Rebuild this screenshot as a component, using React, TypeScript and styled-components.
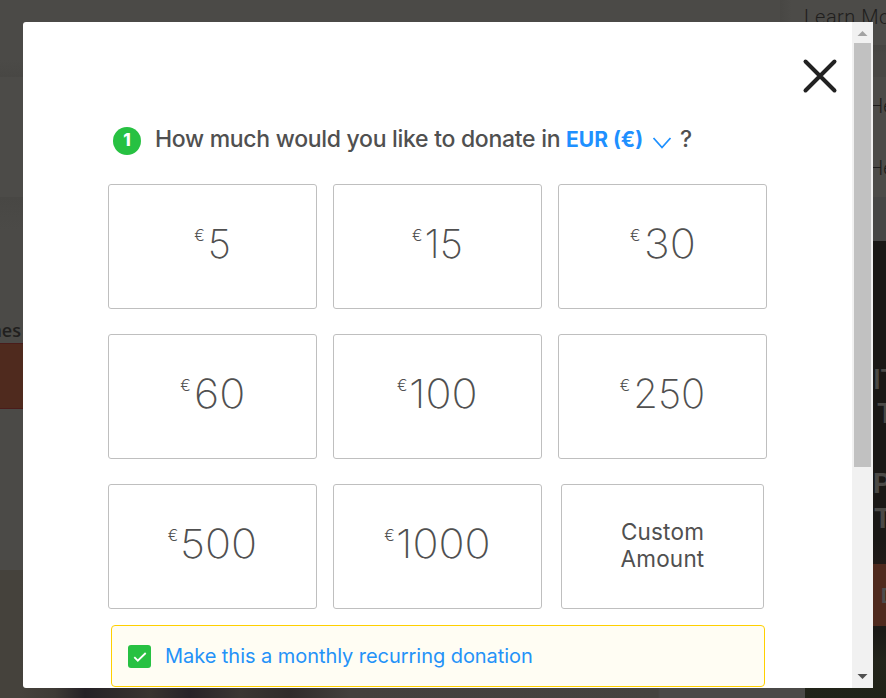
import React from 'react';
import styled, { createGlobalStyle } from 'styled-components';

const GlobalStyle = createGlobalStyle`
  * { box-sizing: border-box; }
  html, body, #root { margin: 0; height: 100%; }
  body { overflow: hidden; font-family: Inter, "Liberation Sans", sans-serif; color: #505050; }
`;

const Screen = styled.div`
  position: relative;
  width: 886px;
  height: 698px;
  overflow: hidden;
  background: #4b4a47;
`;

const Page = styled.div`
  display: grid;
  grid-template-columns: 780px 106px;
  height: 698px;
`;

const MainColumn = styled.div`
  display: flex;
  flex-direction: column;
`;

const Band = styled.div<{ $h: number; $bg: string }>`
  flex: none;
  height: ${p => p.$h}px;
  background: ${p => p.$bg};
  overflow: hidden;
`;

const FieldLabel = styled.div`
  width: 21px;
  height: 146px;
  display: flex;
  align-items: flex-end;
  justify-content: flex-end;
  padding-bottom: 1px;
  font: 600 18px/24px "Open Sans", sans-serif;
  color: #211f1e;
  white-space: nowrap;
`;

const OrangeBar = styled.div`
  height: 66px;
  background: #4f2a1e;
  border: solid #4a1c1a;
  border-width: 1px 0;
`;

const SideColumn = styled.div`
  display: flex;
  flex-direction: column;
`;

const NavItem = styled.div`
  padding-left: 24px;
  font: 300 20px/34px Roboto, sans-serif;
  letter-spacing: 0.5px;
  color: #1f1e1d;
  white-space: nowrap;
`;

const MenuItem = styled.div`
  height: 62px;
  padding-left: 89px;
  font: 300 20px/58px Roboto, sans-serif;
  color: #1d1c1b;
  white-space: nowrap;
`;

const Poster = styled.div`
  display: flex;
  flex-direction: column;
  align-items: flex-start;
  flex: 1;
  margin-left: 25px;
  padding: 121px 0 0 68px;
  background: linear-gradient(#1a1816 0 300px, #241d19 340px, #1b1a17 390px, #23241b 420px, #202318);
`;

const PosterLine = styled.div<{ $h: number; $indent?: number; $weight?: number }>`
  height: ${p => p.$h}px;
  padding-left: ${p => p.$indent || 0}px;
  font: ${p => p.$weight || 500} 28px/36px Roboto, sans-serif;
  color: #4a4946;
  white-space: nowrap;
`;

const PosterButton = styled.div`
  width: 40px;
  height: 62px;
  padding-left: 8px;
  background: #4f2a1e;
  color: #4c4c4c;
  font: 700 20px/64px Roboto, sans-serif;
`;

const Modal = styled.div`
  position: absolute;
  left: 23px;
  top: 22px;
  width: 850px;
  height: 666px;
  display: flex;
  background: #fff;
  border-radius: 3px 0 0 3px;
  overflow: hidden;
`;

const Content = styled.main`
  flex: 1;
  display: flex;
  flex-direction: column;
`;

const CloseRow = styled.div`
  display: flex;
  justify-content: flex-end;
  height: 96px;
  padding: 36px 14px 0 0;
`;

const CloseButton = styled.button`
  width: 36px;
  height: 36px;
  padding: 0;
  border: 0;
  background: none;
  svg { display: block; }
`;

const Question = styled.h1`
  display: flex;
  align-items: center;
  height: 44px;
  margin: 0;
  padding-left: 90px;
  font-weight: 500;
  font-size: 23px;
  line-height: 42px;
  white-space: nowrap;
`;

const StepBadge = styled.span`
  width: 28px;
  height: 28px;
  margin: 2px 14px 0 0;
  border-radius: 50%;
  background: #27c142;
  color: #fff;
  font-weight: 800;
  font-size: 17px;
  line-height: 26px;
  text-align: center;
`;

const QuestionText = styled.span`
  width: 411px;
  height: 44px;
  letter-spacing: -0.29px;
`;

const Currency = styled.span`
  width: 86px;
  color: #1e90ff;
  font-weight: 700;
  font-size: 21px;
  letter-spacing: 0;
`;

const Chevron = styled.svg`
  margin: 5px 8px 0 0;
`;

const QuestionMark = styled.span`
  height: 44px;
`;

const Amounts = styled.div`
  display: grid;
  grid-template-columns: repeat(3, 209px);
  grid-auto-rows: 125px;
  gap: 25px 16px;
  padding: 22px 0 0 85px;
`;

const AmountCard = styled.button`
  display: flex;
  align-items: flex-start;
  justify-content: center;
  padding: 34px 0 0 0;
  border: 1px solid #bfbfbf;
  border-radius: 3px;
  background: #fff;
  color: #505050;
  font-family: inherit;
`;

const Sign = styled.span`
  margin-top: 6px;
  font-weight: 350;
  font-size: 15.5px;
  line-height: 21px;
`;

const Value = styled.span<{ $gap: number; $extra: number }>`
  margin: 0 ${p => p.$extra}px 0 ${p => p.$gap}px;
  font-weight: 200;
  font-size: 40px;
  line-height: 50px;
  transform: scaleX(${p => (p.$extra ? 1.08 : 1)});
  transform-origin: left;
`;

const CustomCard = styled(AmountCard)`
  align-items: center;
  margin: 0 3px;
  padding: 0 40px 4px;
  font-size: 22.5px;
  line-height: 27px;
  font-weight: 370;
  letter-spacing: 0.2px;
`;

const Recurring = styled.label`
  display: flex;
  align-items: center;
  width: 654px;
  height: 62px;
  margin: 16px 0 0 88px;
  padding-left: 16px;
  border: 1px solid #ffd000;
  border-radius: 4px;
  background: #fffdf3;
  color: #2492f8;
  font-size: 20px;
  font-weight: 370;
  letter-spacing: -0.05px;
  white-space: nowrap;
`;

const Checkbox = styled.span`
  display: flex;
  align-items: center;
  justify-content: center;
  width: 23px;
  height: 23px;
  margin: 1px 14px 0 0;
  border-radius: 3px;
  background: #27c142;
`;

const Scrollbar = styled.div`
  display: flex;
  flex-direction: column;
  align-items: center;
  width: 21px;
  background: #f1f1f1;
`;

const ScrollEnd = styled.svg`
  flex: none;
`;

const Thumb = styled.div`
  width: 17px;
  height: 424px;
  margin-bottom: auto;
  background: #c1c1c1;
`;

const amounts = [
  { value: '5', gap: 3, extra: 0 },
  { value: '15', gap: 2, extra: 0 },
  { value: '30', gap: 3, extra: 3.5 },
  { value: '60', gap: 3, extra: 3.5 },
  { value: '100', gap: 2, extra: 5 },
  { value: '250', gap: 3, extra: 0 },
  { value: '500', gap: 2, extra: 5.5 },
  { value: '1000', gap: 1.5, extra: 7 },
];

export default function App() {
  return (
    <Screen>
      <GlobalStyle />
      <Page>
        <MainColumn>
          <Band $h={77} $bg="linear-gradient(#4b4a47 60px, #484744)" />
          <Band $h={120} $bg="#4c4b48" />
          <Band $h={373} $bg="linear-gradient(#484744, #4b4a47 32px)">
            <FieldLabel>names</FieldLabel>
            <OrangeBar />
          </Band>
          <Band $h={128} $bg="linear-gradient(90deg, #45423c 20px, #3e3a35 55px, #252126 85px, #39342f 150px, #272228 190px, #3b3632 240px, #302b2b 290px, #44403d 350px, #45433f 658px, #4a4947 660px)" />
        </MainColumn>
        <SideColumn>
          <Band $h={45} $bg="linear-gradient(90deg, #484744, #4c4b48 12px)">
            <NavItem>Learn More</NavItem>
          </Band>
          <Band $h={32} $bg="linear-gradient(#454441, #484744 10px)" />
          <Band $h={120} $bg="#4c4b48">
            <MenuItem>Help</MenuItem>
            <MenuItem>Help</MenuItem>
          </Band>
          <Band $h={44} $bg="#464645" />
          <Poster>
            <PosterLine $h={34}>IT</PosterLine>
            <PosterLine $h={70} $indent={4}>TO</PosterLine>
            <PosterLine $h={35} $weight={700}>PL</PosterLine>
            <PosterLine $h={63} $indent={1} $weight={700}>TH</PosterLine>
            <PosterButton>D</PosterButton>
          </Poster>
        </SideColumn>
      </Page>

      <Modal role="dialog" aria-modal="true">
        <Content>
          <CloseRow>
            <CloseButton aria-label="Close">
              <svg width="36" height="36" viewBox="0 0 36 36" stroke="#222" strokeWidth="4" strokeLinecap="round">
                <path d="M3.5 3.5 32.5 32.5M32.5 3.5 3.5 32.5" />
              </svg>
            </CloseButton>
          </CloseRow>
          <Question>
            <StepBadge>1</StepBadge>
            <QuestionText>How much would you like to donate in</QuestionText>
            <Currency>EUR (€)</Currency>
            <Chevron width="20" height="14" viewBox="0 0 20 14" fill="none" stroke="#1e90ff" strokeWidth="1.8">
              <path d="M1.5 2 10 11.5 18.5 2" />
            </Chevron>
            <QuestionMark>?</QuestionMark>
          </Question>
          <Amounts>
            {amounts.map(a => (
              <AmountCard key={a.value}>
                <Sign>€</Sign>
                <Value $gap={a.gap} $extra={a.extra}>{a.value}</Value>
              </AmountCard>
            ))}
            <CustomCard>Custom Amount</CustomCard>
          </Amounts>
          <Recurring>
            <Checkbox>
              <svg width="14" height="12" viewBox="0 0 14 12" fill="none" stroke="#fff" strokeWidth="1.8">
                <path d="M1.3 6.2 4.8 9.7 12.7 2" />
              </svg>
            </Checkbox>
            Make this a monthly recurring donation
          </Recurring>
        </Content>
        <Scrollbar>
          <ScrollEnd width="21" height="21" viewBox="0 0 21 21">
            <path d="M5.5 14 10.5 9 15.5 14Z" fill="#a3a3a3" />
          </ScrollEnd>
          <Thumb />
          <ScrollEnd width="21" height="21" viewBox="0 0 21 21">
            <path d="M5.5 7 15.5 7 10.5 12Z" fill="#505050" />
          </ScrollEnd>
        </Scrollbar>
      </Modal>
    </Screen>
  );
}
